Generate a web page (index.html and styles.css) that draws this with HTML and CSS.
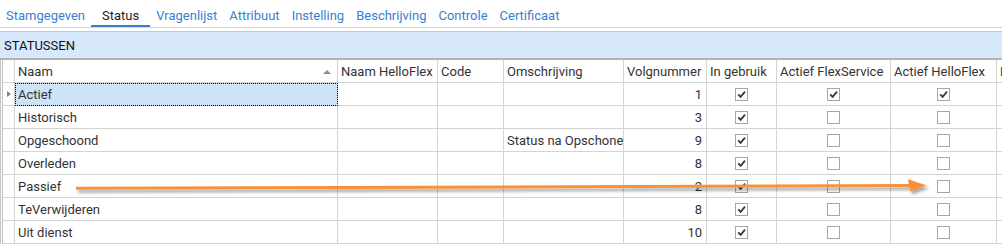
FILE: index.html
```html
<!DOCTYPE html>
<html lang="nl">
  <head>
    <meta charset="UTF-8" />
    <title>Status</title>
    <link rel="stylesheet" href="styles.css">
  </head>
  <body>
    <div class="tabs">
      <a class="tab">Stamgegeven</a>
      <a class="tab active">Status</a>
      <a class="tab">Vragenlijst</a>
      <a class="tab">Attribuut</a>
      <a class="tab">Instelling</a>
      <a class="tab">Beschrijving</a>
      <a class="tab">Controle</a>
      <a class="tab">Certificaat</a>
    </div>

    <div class="panel">
      <div class="panel-title">STATUSSEN</div>
      <div class="grid">
        <div class="row head">
          <div class="cell ind"></div>
          <div class="cell sort">Naam<span class="sort-up"></span></div>
          <div class="cell">Naam HelloFlex</div>
          <div class="cell">Code</div>
          <div class="cell">Omschrijving</div>
          <div class="cell">Volgnummer</div>
          <div class="cell">In gebruik</div>
          <div class="cell">Actief FlexService</div>
          <div class="cell">Actief HelloFlex</div>
          <div class="cell">Kleur</div>
        </div>

        <div class="row">
          <div class="cell ind"><span class="cur"></span></div>
          <div class="cell sel">Actief</div>
          <div class="cell"></div>
          <div class="cell"></div>
          <div class="cell"></div>
          <div class="cell num">1</div>
          <div class="cell chk"><span class="cb"><svg viewBox="0 0 11 11"><path d="M2.2 5.4 L4.6 7.9 L9 2.6" /></svg></span></div>
          <div class="cell chk"><span class="cb"><svg viewBox="0 0 11 11"><path d="M2.2 5.4 L4.6 7.9 L9 2.6" /></svg></span></div>
          <div class="cell chk"><span class="cb"><svg viewBox="0 0 11 11"><path d="M2.2 5.4 L4.6 7.9 L9 2.6" /></svg></span></div>
          <div class="cell"></div>
        </div>

        <div class="row">
          <div class="cell ind"></div>
          <div class="cell">Historisch</div>
          <div class="cell"></div>
          <div class="cell"></div>
          <div class="cell"></div>
          <div class="cell num">3</div>
          <div class="cell chk"><span class="cb"><svg viewBox="0 0 11 11"><path d="M2.2 5.4 L4.6 7.9 L9 2.6" /></svg></span></div>
          <div class="cell chk"><span class="cb"></span></div>
          <div class="cell chk"><span class="cb"></span></div>
          <div class="cell"></div>
        </div>

        <div class="row">
          <div class="cell ind"></div>
          <div class="cell">Opgeschoond</div>
          <div class="cell"></div>
          <div class="cell"></div>
          <div class="cell">Status na Opschonen</div>
          <div class="cell num">9</div>
          <div class="cell chk"><span class="cb"><svg viewBox="0 0 11 11"><path d="M2.2 5.4 L4.6 7.9 L9 2.6" /></svg></span></div>
          <div class="cell chk"><span class="cb"></span></div>
          <div class="cell chk"><span class="cb"></span></div>
          <div class="cell"></div>
        </div>

        <div class="row">
          <div class="cell ind"></div>
          <div class="cell">Overleden</div>
          <div class="cell"></div>
          <div class="cell"></div>
          <div class="cell"></div>
          <div class="cell num">8</div>
          <div class="cell chk"><span class="cb"><svg viewBox="0 0 11 11"><path d="M2.2 5.4 L4.6 7.9 L9 2.6" /></svg></span></div>
          <div class="cell chk"><span class="cb"></span></div>
          <div class="cell chk"><span class="cb"></span></div>
          <div class="cell"></div>
        </div>

        <div class="row">
          <div class="cell ind"></div>
          <div class="cell">Passief</div>
          <div class="cell"></div>
          <div class="cell"></div>
          <div class="cell"></div>
          <div class="cell num">2</div>
          <div class="cell chk"><span class="cb"><svg viewBox="0 0 11 11"><path d="M2.2 5.4 L4.6 7.9 L9 2.6" /></svg></span></div>
          <div class="cell chk"><span class="cb"></span></div>
          <div class="cell chk"><span class="cb"></span></div>
          <div class="cell"></div>
        </div>

        <div class="row">
          <div class="cell ind"></div>
          <div class="cell">TeVerwijderen</div>
          <div class="cell"></div>
          <div class="cell"></div>
          <div class="cell"></div>
          <div class="cell num">8</div>
          <div class="cell chk"><span class="cb"><svg viewBox="0 0 11 11"><path d="M2.2 5.4 L4.6 7.9 L9 2.6" /></svg></span></div>
          <div class="cell chk"><span class="cb"></span></div>
          <div class="cell chk"><span class="cb"></span></div>
          <div class="cell"></div>
        </div>

        <div class="row">
          <div class="cell ind"></div>
          <div class="cell">Uit dienst</div>
          <div class="cell"></div>
          <div class="cell"></div>
          <div class="cell"></div>
          <div class="cell num">10</div>
          <div class="cell chk"><span class="cb"><svg viewBox="0 0 11 11"><path d="M2.2 5.4 L4.6 7.9 L9 2.6" /></svg></span></div>
          <div class="cell chk"><span class="cb"></span></div>
          <div class="cell chk"><span class="cb"></span></div>
          <div class="cell"></div>
        </div>
      </div>
    </div>

    <!-- annotatie: pijl over de rij Passief -->
    <svg class="annot" width="1002" height="249" viewBox="0 0 1002 249">
      <defs>
        <filter id="shadow" filterUnits="userSpaceOnUse" x="0" y="160" width="1002" height="50">
          <feDropShadow dx="2" dy="3" stdDeviation="1.4" flood-color="#000" flood-opacity="0.35" />
        </filter>
      </defs>
      <g filter="url(#shadow)">
        <path d="M76 188.3 L911 185.6" stroke="#f7923a" stroke-width="3" fill="none" />
        <path d="M908 179.3 L927 185.5 L910 191.4 Z" fill="#f7923a" />
      </g>
    </svg>
  </body>
</html>
```

FILE: styles.css
```css
body {
  margin: 0;
  width: 1002px;
  height: 249px;
  overflow: hidden;
  position: relative;
  background: #fff;
  font-family: Roboto, "Liberation Sans", sans-serif;
  font-size: 13px;
  color: #333;
}

/* tabbladen */
.tabs {
  display: flex;
  height: 27px;
  border-bottom: 1px solid #d6d6d6;
}
.tab {
  padding: 6px 6px 0;
  height: 19px;
  line-height: 19px;
  color: #3a80d2;
  border-bottom: 2px solid transparent;
  white-space: nowrap;
}
.tab.active {
  padding: 6px 11px 0;
  color: #1e1e1e;
  border-bottom-color: #3a7fcb;
}

/* paneel */
.panel {
  margin-top: 3px;
}
.panel-title {
  height: 24px;
  line-height: 24px;
  padding: 2px 0 0 4px;
  background: #d8e8fc;
  border-top: 1px solid #c6c6c6;
  border-bottom: 2px solid #b3b3b3;
  color: #111;
}

/* grid */
.grid {
  border-left: 3px double #c4c4c4;
}
.row {
  display: grid;
  grid-template-columns: 12px 323px 100px 66px 120px 83px 70px 114px 106px 140px;
  height: 23px;
}
.cell {
  border-right: 1px solid #d4d4d4;
  border-bottom: 1px solid #d4d4d4;
  padding: 2px 3px 0;
  line-height: 20px;
  white-space: nowrap;
  overflow: hidden;
}
.cell.ind {
  padding: 0;
  display: flex;
  align-items: center;
  justify-content: center;
}
.cur {
  width: 0;
  height: 0;
  border-left: 4px solid #858585;
  border-top: 3.5px solid transparent;
  border-bottom: 3.5px solid transparent;
}
.cell.sort {
  display: flex;
  align-items: center;
  justify-content: space-between;
}
.sort-up {
  width: 0;
  height: 0;
  margin-right: 3px;
  border-left: 4px solid transparent;
  border-right: 4px solid transparent;
  border-bottom: 4px solid #8c8c8c;
}
.cell.sel {
  background: #cde3f7;
  outline: 1px dotted #000;
  outline-offset: -1px;
}
.cell.num {
  text-align: right;
  padding-right: 4px;
}
.cell.chk {
  padding: 0;
  display: flex;
  align-items: center;
  justify-content: center;
}
.cb {
  width: 11px;
  height: 11px;
  border: 1px solid #a6a6a6;
  background: #fff;
  display: block;
}
.cb svg {
  display: block;
  width: 11px;
  height: 11px;
}
.cb path {
  fill: none;
  stroke: #3a3a3a;
  stroke-width: 1.8;
}

.annot {
  position: absolute;
  left: 0;
  top: 0;
  pointer-events: none;
}
```
